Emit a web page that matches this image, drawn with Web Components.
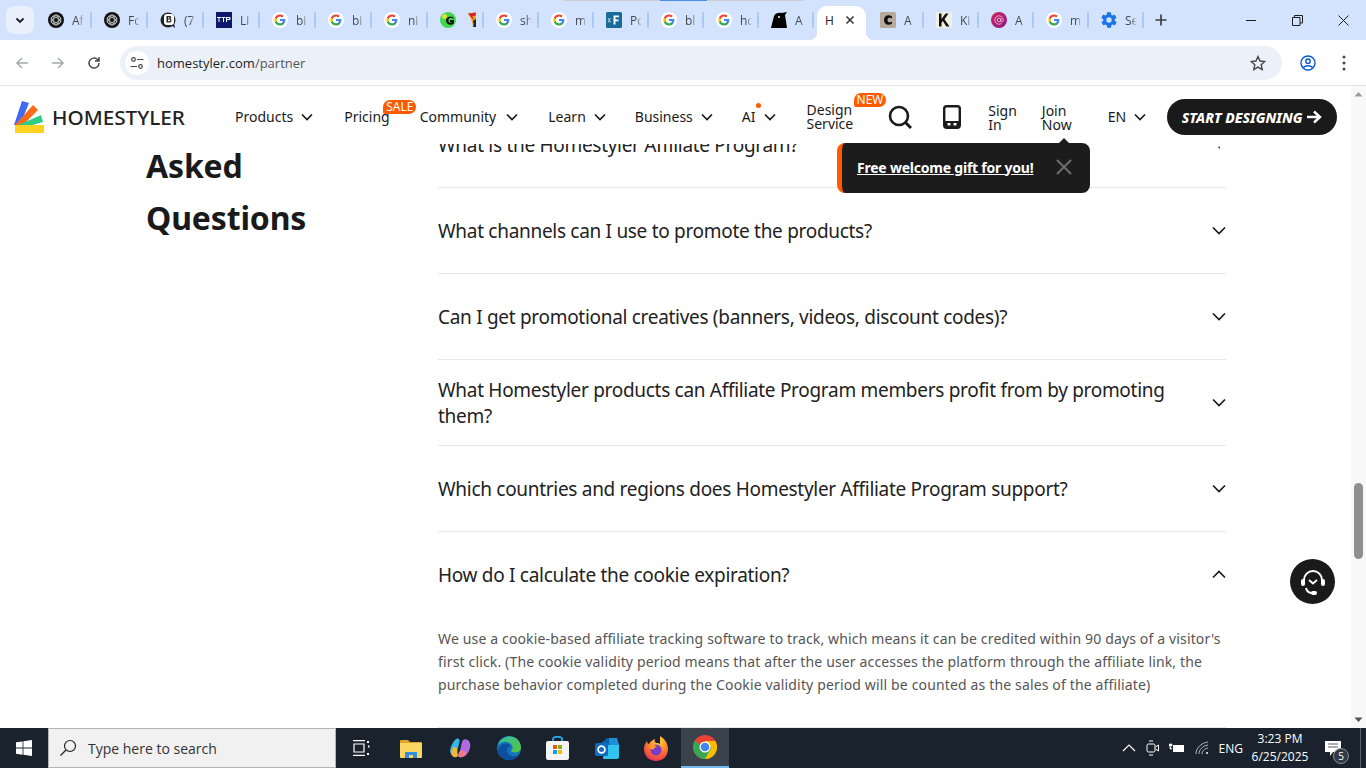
<!DOCTYPE html>
<html>
<head>
<meta charset="utf-8">
<title>Homestyler partner</title>
<style>
  html, body { margin: 0; padding: 0; height: 100%; overflow: hidden; }
  body { font-family: "Noto Sans", sans-serif; }
</style>
</head>
<body>
<app-window></app-window>
<script>
const GOOGLE = `<svg viewBox="0 0 16 16" width="16" height="16"><circle cx="8" cy="8" r="8" fill="#fff"/><g transform="translate(2.4 2.4) scale(.233)"><path fill="#4285F4" d="M47 24.5c0-1.6-.1-3.100-.4-4.500H24v8.800h12.900c-.6 3-2.300 5.500-4.900 7.200v6h7.900C44.500 37.800 47 31.700 47 24.500z"/><path fill="#34A853" d="M24 48c6.500 0 11.900-2.100 15.900-5.800l-7.900-6c-2.200 1.500-5 2.300-8 2.300-6.200 0-11.500-4.200-13.400-9.800H2.500v6.200C6.400 42.600 14.600 48 24 48z"/><path fill="#FBBC05" d="M10.600 28.700c-.5-1.500-.8-3-.8-4.700s.3-3.200.8-4.700v-6.200H2.500C.9 16.300 0 20 0 24s.9 7.700 2.500 10.900l8.100-6.200z"/><path fill="#EA4335" d="M24 9.500c3.500 0 6.700 1.200 9.200 3.600l6.900-6.900C35.900 2.400 30.500 0 24 0 14.600 0 6.400 5.400 2.500 13.100l8.100 6.200c1.900-5.600 7.200-9.800 13.400-9.800z"/></g></svg>`;
const KNOT = `<svg viewBox="0 0 16 16" width="16" height="16"><circle cx="8" cy="8" r="8" fill="#111"/><g fill="none" stroke="#ccc" stroke-width=".8"><circle cx="8" cy="8" r="5"/><ellipse cx="8" cy="8" rx="5" ry="2.400" transform="rotate(30 8 8)"/><ellipse cx="8" cy="8" rx="5" ry="2.400" transform="rotate(-30 8 8)"/><ellipse cx="8" cy="8" rx="5" ry="2.400" transform="rotate(90 8 8)"/></g></svg>`;
const ICONS = {
  google: GOOGLE,
  knot: KNOT,
  b: `<svg viewBox="0 0 16 16" width="16" height="16"><circle cx="8" cy="8" r="7.500" fill="#222"/><path d="M11 13l4 3-1-5z" fill="#222"/><rect x="4" y="2" width="10" height="11" rx="3" fill="#fff"/><path d="M6.500 4h3.200c2 0 2 2.500.6 3 1.800.4 1.600 3.500-.6 3.500H6.500zM8 5.200v1.300h1.200c.8 0 .8-1.300 0-1.300zM8 7.600v1.700h1.500c1 0 1-1.700 0-1.700z" fill="#222"/></svg>`,
  ttp: `<svg viewBox="0 0 16 16" width="16" height="16"><rect width="16" height="16" fill="#0b1a6e"/><path d="M1 5h4v1H3.500v4h-1V6H1zM5.500 5h4v1H8v4H7V6H5.500zM10 5h3.500c1.500 0 1.500 3 0 3H11v2h-1zM11 6v1h2c.5 0 .5-1 0-1z" fill="#fff"/></svg>`,
  greeng: `<svg viewBox="0 0 16 16" width="16" height="16"><circle cx="8" cy="8" r="8" fill="#44d651"/><circle cx="4.500" cy="4.500" r="2.500" fill="#d6e337"/><path d="M14 6.500C13 3.500 7 3.500 6 8c-.5 4.500 6 6.500 8 3V8h-4v2h2c-1 1.500-3.800.8-3.600-2 .2-2.500 3.300-3 4-1.500z" fill="#111"/></svg>`,
  flame: `<svg viewBox="0 0 8 16" width="8" height="16"><path d="M0 1.500L8 .5 7.500 4 8 5v10H5C4.500 10 3 6 0 1.500z" fill="#e8a020"/><path d="M0 1.500L8 .5 7.500 4 4 4c1 1 1.500 2 1.500 4C4 6 2 4 0 1.500z" fill="#d8261c"/><path d="M5 15c.8-2 .8-4 0-6l3-2v8z" fill="#222"/></svg>`,
  xf: `<svg viewBox="0 0 16 16" width="16" height="16"><rect width="16" height="16" rx="1.500" fill="#176a9a"/><path d="M1.500 6l1.200 2-1.200 2.500h1l.8-1.600.8 1.600h1L3.900 8 5.100 6h-1l-.7 1.300L2.600 6z" fill="#a8cfe4"/><path d="M7.500 3.500H13v1.800H9.500v2.200h3v1.800h-3v3.200h-2z" fill="#fff"/></svg>`,
  hood: `<svg viewBox="0 0 16 16" width="16" height="16"><path d="M0 16L3 4c1-3 5-4 8-3l5-1-2 3 2 13z" fill="#000"/><circle cx="8" cy="5" r="1" fill="#fff"/></svg>`,
  c: `<svg viewBox="0 0 16 16" width="16" height="16"><rect width="16" height="16" rx="1.500" fill="#b9a99a"/><path d="M12 4.500C8.500 2 4 3.500 4 8s4.500 6 8 3.500v-2C10 11 7.500 10.500 7.500 8S10 5 12 6.500z" fill="#111"/></svg>`,
  k: `<svg viewBox="0 0 16 16" width="16" height="16"><rect width="16" height="16" fill="#f1efe4"/><path d="M3 1.500h2.500v5.600l4-5.600h3L8.500 7.300l5 7.200h-3.200L6.800 9.100l-1.300 1.600v3.800H3z" fill="#111"/></svg>`,
  at: `<svg viewBox="0 0 16 16" width="16" height="16"><defs><linearGradient id="atg" x1="0" y1="0" x2="1" y2="1"><stop offset="0" stop-color="#d0245f"/><stop offset="1" stop-color="#8a1a86"/></linearGradient></defs><circle cx="8" cy="8" r="8" fill="url(#atg)"/><g fill="none" stroke="#f4c9dd" stroke-width=".8"><circle cx="8" cy="8" r="1.800"/><path d="M9.800 6.200V9c0 1.500 2.400 1.300 2.400-1a4.200 4.200 0 1 0-1.700 3.400"/></g></svg>`,
  gear: `<svg viewBox="0 0 24 24" width="16" height="16" style="transform:scale(1.150)"><path fill="#1a73e8" d="M19.400 13c.1-.3.100-.7.100-1s0-.7-.1-1l2.100-1.600c.2-.2.200-.4.100-.6l-2-3.500c-.1-.2-.4-.3-.6-.2l-2.500 1c-.5-.4-1.100-.7-1.700-1l-.4-2.600c0-.3-.2-.5-.5-.5h-4c-.3 0-.5.200-.5.400l-.4 2.700c-.6.200-1.100.6-1.700 1l-2.500-1c-.2-.1-.5 0-.6.200l-2 3.500c-.1.200-.1.500.1.600L4.600 11c-.1.300-.1.700-.1 1s0 .7.100 1l-2.100 1.600c-.2.200-.2.400-.1.600l2 3.500c.1.200.4.300.6.200l2.500-1c.5.400 1.100.7 1.700 1l.4 2.600c0 .3.200.5.500.5h4c.3 0 .5-.2.500-.4l.4-2.700c.6-.2 1.100-.6 1.700-1l2.500 1c.2.100.5 0 .6-.2l2-3.500c.1-.2.100-.5-.1-.6zM12 15.500a3.500 3.500 0 1 1 0-7 3.500 3.500 0 0 1 0 7z"/></svg>`
};

class TabItem extends HTMLElement {
  connectedCallback() {
    const icon = this.getAttribute('icon');
    const extra = this.getAttribute('extra');
    const w = this.getAttribute('w') || 56;
    this.attachShadow({ mode: 'open' });
    this.shadowRoot.innerHTML = `
      <style>
        :host { display: flex; align-items: center; box-sizing: border-box; height: 28px; padding-left: 12px; width: ${w}px; position: relative; flex: none; }
        .t { font: 12px "Open Sans", sans-serif; color: #45494f; margin-left: 8px; width: 12px; overflow: hidden; white-space: nowrap;
             -webkit-mask-image: linear-gradient(90deg, #000 50%, transparent); }
        .e { margin-left: 12px; display: flex; }
        .i { display: flex; }
        .sep { width: 2px; height: 16px; background: #a9c7f7; border-radius: 1px; margin-left: auto; }
      </style>
      <span class="i">${ICONS[icon]}</span>
      ${extra ? `<span class="e">${ICONS[extra]}</span>` : `<span class="t">${this.getAttribute('label') || ''}</span>`}
      <span class="sep"></span>`;
  }
}
customElements.define('tab-item', TabItem);

class TabStrip extends HTMLElement {
  constructor() {
    super();
    this.attachShadow({ mode: 'open' });
  }
  tabs(list) {
    return list.map(t => `<tab-item icon="${t[0]}" label="${t[1]}" w="${t[2] || 56}" ${t[3] ? `extra="${t[3]}"` : ''}></tab-item>`).join('');
  }
  connectedCallback() {
    this.shadowRoot.innerHTML = `
      <style>
        :host { display: flex; height: 40px; background: #d3e3fd; box-sizing: border-box; padding: 6px 0 0 6px; position: relative; flex: none; }
        .down { width: 28px; height: 28px; background: #e9f0fc; border-radius: 8px; display: flex; align-items: center; justify-content: center; margin-right: 2px; flex: none; }
        .active { width: 49px; height: 34px; background: #fff; border-radius: 10px 10px 0 0; flex: none; box-sizing: border-box; padding: 0 0 6px 8px; margin: 0 0 0 3px; display: flex; align-items: center; font: 12px "Open Sans", sans-serif; color: #202124; position: relative; }
        .active svg { margin-left: 11px; }
        .active::before, .active::after { content: ""; position: absolute; bottom: 0; width: 8px; height: 8px; background: radial-gradient(circle at 0 0, #d3e3fd 8px, #fff 8.500px); }
        .active::before { left: -8px; }
        .active::after { right: -8px; background: radial-gradient(circle at 100% 0, #d3e3fd 8px, #fff 8.500px); }
        .plus { margin: 1px 0 0 11px; display: flex; }
        .ctl { position: absolute; top: 0; right: 0; height: 40px; display: flex; }
        .ctl span { width: 46px; display: flex; align-items: center; justify-content: center; }
        .line { position: absolute; top: 0; left: 563px; width: 240px; height: 1px; background: linear-gradient(90deg, #ccc 0 97px, #4a90e8 97px 144px, #ccc 144px); }
      </style>
      <div class="line"></div>
      <div class="down"><svg width="12" height="12" viewBox="0 0 12 12"><path d="M2.500 4.500L6 8l3.500-3.500" fill="none" stroke="#1f1f1f" stroke-width="1.800"/></svg></div>
      ${this.tabs([['knot', 'Af'], ['knot', 'Fc'], ['b', '(7'], ['ttp', 'Li'], ['google', 'bi'], ['google', 'bi'], ['google', 'ni'], ['greeng', '', 56, 'flame'], ['google', 'sh', 55], ['google', 'm', 55], ['xf', 'Pc', 55], ['google', 'bl', 55], ['google', 'hc', 55], ['hood', 'A', 55]])}
      <div class="active">H<svg width="10" height="10" viewBox="0 0 10 10"><path d="M1.500 1.500l7 7m0-7l-7 7" stroke="#333" stroke-width="1.500"/></svg></div>
      <tab-item icon="c" label="A" w="58" style="padding-left:14px"></tab-item>
      <tab-item icon="k" label="Ki" w="55"></tab-item>
      <tab-item icon="at" label="A" w="55"></tab-item>
      <tab-item icon="google" label="m" w="55"></tab-item>
      <tab-item icon="gear" label="Se" w="55"></tab-item>
      <div class="plus"><svg width="12" height="28" viewBox="0 0 12 28"><path d="M6 8.500v11M.5 14h11" stroke="#3c4043" stroke-width="1.700" transform="translate(0 -1)"/></svg></div>
      <div class="ctl">
        <span><svg width="11" height="11"><path d="M0 5.500h10" stroke="#1f1f1f"/></svg></span>
        <span><svg width="11" height="11"><path d="M.5 2.500h7.500v8H.500zM2.500 2.500V.500h8v7.500H8" fill="none" stroke="#1f1f1f"/></svg></span>
        <span><svg width="11" height="11"><path d="M.5.500l10 10m0-10l-10 10" stroke="#1f1f1f"/></svg></span>
      </div>`;
  }
}
customElements.define('tab-strip', TabStrip);

class AddressBar extends HTMLElement {
  constructor() {
    super();
    this.attachShadow({ mode: 'open' });
  }
  connectedCallback() {
    this.shadowRoot.innerHTML = `
      <style>
        :host { display: flex; align-items: center; height: 46px; background: #fff; border-bottom: 1px solid #e3e3e3; box-sizing: border-box; flex: none; padding-top: 1px; }
        .nav { width: 36px; display: flex; justify-content: center; flex: none; }
        .pad { width: 4px; flex: none; }
        .omni { width: 1162px; height: 34px; margin-left: 8px; background: #ecf1f9; border-radius: 17px; display: flex; align-items: center; flex: none; font: 13px "Open Sans", sans-serif; color: #1f1f1f; box-sizing: border-box; padding: 0 16px 0 5px; }
        .tune { width: 24px; height: 24px; border-radius: 50%; background: #fff; display: flex; align-items: center; justify-content: center; margin-right: 8px; }
        .url span { color: #555; }
        .star { margin-left: auto; display: flex; }
        .acct { margin-left: 18px; display: flex; }
        .dots { margin-left: 26px; display: flex; }
      </style>
      <div class="pad"></div>
      <div class="nav"><svg width="16" height="16" viewBox="0 0 16 16"><path d="M14 8H3M8 3L3 8l5 5" fill="none" stroke="#a8abaf" stroke-width="1.500"/></svg></div>
      <div class="nav"><svg width="16" height="16" viewBox="0 0 16 16"><path d="M2 8h11M8 3l5 5-5 5" fill="none" stroke="#a8abaf" stroke-width="1.500"/></svg></div>
      <div class="nav"><svg width="16" height="16" viewBox="0 0 16 16"><path d="M13 8a5 5 0 1 1-1.500-3.500L13 6M13 2v4H9" fill="none" stroke="#474747" stroke-width="1.500"/></svg></div>
      <div class="omni">
        <div class="tune"><svg width="14" height="14" viewBox="0 0 14 14"><g fill="none" stroke="#474747" stroke-width="1.200"><circle cx="3.500" cy="3.500" r="1.800"/><circle cx="10.500" cy="10.500" r="1.800"/><path d="M7 3.500h6.500M.5 10.500H7"/></g></svg></div>
        <div class="url">homestyler.com<span>/partner</span></div>
        <div class="star"><svg width="16" height="16" viewBox="0 0 16 16"><path d="M8 1.500l2 4.500 4.800.5-3.600 3.200 1 4.800L8 12.100l-4.200 2.400 1-4.800L1.200 6.500 6 6z" fill="none" stroke="#474747" stroke-width="1.400"/></svg></div>
      </div>
      <div class="acct"><svg width="16" height="16" viewBox="0 0 16 16"><g fill="none" stroke="#0b57d0" stroke-width="1.400"><circle cx="8" cy="8" r="7"/><circle cx="8" cy="6.200" r="2.200"/><path d="M3.300 12.500c2.500-2.400 6.900-2.400 9.400 0"/></g></svg></div>
      <div class="dots"><svg width="4" height="16" viewBox="0 0 4 16"><g fill="#474747"><circle cx="2" cy="2" r="1.500"/><circle cx="2" cy="8" r="1.500"/><circle cx="2" cy="14" r="1.500"/></g></svg></div>`;
  }
}
customElements.define('address-bar', AddressBar);

const CHEV = `<svg width="12" height="8" viewBox="0 0 12 8"><path d="M1 1.500l5 5 5-5" fill="none" stroke="#1a1a1a" stroke-width="1.700"/></svg>`;

class NavItem extends HTMLElement {
  connectedCallback() {
    const badge = this.getAttribute('badge');
    const x = this.hasAttribute('chev');
    this.attachShadow({ mode: 'open' });
    this.shadowRoot.innerHTML = `
      <style>
        :host { display: flex; align-items: center; position: relative; font-size: 14px; color: #1a1a1a; line-height: 14px; flex: none; }
        .b { position: absolute; background: #ff5a00; color: #fff; font-size: 12px; line-height: 14px; height: 14px; border-radius: 7px 7px 7px 2px; padding: 0 3px; }
        svg { margin-left: var(--chev-gap, 8px); }
        .dot { position: absolute; width: 5px; height: 5px; border-radius: 50%; background: #ff5a00; left: 14px; top: -7px; }
      </style>
      <span><slot></slot></span>
      ${x ? CHEV : ''}
      ${badge ? `<span class="b" style="${this.getAttribute('badge-pos')}">${badge}</span>` : ''}
      ${this.hasAttribute('dot') ? '<span class="dot"></span>' : ''}`;
  }
}
customElements.define('nav-item', NavItem);

class SiteHeader extends HTMLElement {
  constructor() {
    super();
    this.attachShadow({ mode: 'open' });
  }
  connectedCallback() {
    this.shadowRoot.innerHTML = `
      <style>
        :host { display: flex; align-items: center; height: 58px; background: #fff; position: relative; z-index: 2; padding: 4px 0 0 14px; box-sizing: border-box; flex: none; }
        .logo { display: flex; align-items: center; width: 221px; flex: none; font-size: 20.700px; font-weight: 500; color: #222; }
        .logo svg { margin-right: 8px; }
        .cta { width: 170px; height: 36px; flex: none; margin-left: 21px; border-radius: 18px; background: #1a1a1a; color: #fff; display: flex; align-items: center; justify-content: center; font-size: 14px; font-weight: 800; font-style: italic; }
        .cta svg { margin-left: 4px; }
        .ic { display: flex; flex: none; }
      </style>
      <div class="logo">
        <svg width="30" height="32" viewBox="0 0 30 32">
          <path d="M0 24L8 0l7 2-9 22z" fill="#3e6bf2"/>
          <path d="M1 24L19 4l5 5L6 27z" fill="#ff6a1a"/>
          <path d="M2 25l25-11 2 7-24 7z" fill="#2fce85"/>
          <path d="M1 24l29 0v8H1z" fill="#ffd21f"/>
        </svg>
        HOMESTYLER
      </div>
      <nav-item chev>Products</nav-item>
      <nav-item style="margin-left:31px" badge="SALE" badge-pos="left:39px;top:-10px">Pricing</nav-item>
      <nav-item chev style="margin-left:30px;--chev-gap:10px">Community</nav-item>
      <nav-item chev style="margin-left:30px">Learn</nav-item>
      <nav-item chev style="margin-left:29px">Business</nav-item>
      <nav-item chev dot style="margin-left:29px">AI</nav-item>
      <nav-item style="margin-left:31px" badge="NEW" badge-pos="left:47px;top:-10px">Design<br>Service</nav-item>
      <div class="ic" style="margin-left:35px"><svg width="24" height="24" viewBox="0 0 24 24"><circle cx="11" cy="11" r="9" fill="none" stroke="#1a1a1a" stroke-width="2.600"/><path d="M17 17l6 6" stroke="#1a1a1a" stroke-width="3"/></svg></div>
      <div class="ic" style="margin-left:31px"><svg width="18" height="24" viewBox="0 0 18 24"><rect x="1.200" y="1.200" width="15.600" height="21.600" rx="2.500" fill="none" stroke="#1a1a1a" stroke-width="2.400"/><path d="M1 16h16v6H1z" fill="#1a1a1a"/><rect x="4.500" y="18" width="3" height="2.500" fill="#fff"/><rect x="10.500" y="18" width="3" height="2.500" fill="#fff"/></svg></div>
      <nav-item style="margin-left:27px;padding-top:2px">Sign<br>In</nav-item>
      <nav-item style="margin-left:25px;padding-top:2px">Join<br>Now</nav-item>
      <nav-item chev style="margin-left:36px">EN</nav-item>
      <div class="cta">START DESIGNING<svg width="16" height="14" viewBox="0 0 16 14"><path d="M1 7h12M8 1.500L14 7l-6 5.500" fill="none" stroke="#fff" stroke-width="2.400"/></svg></div>`;
  }
}
customElements.define('site-header', SiteHeader);

class GiftTip extends HTMLElement {
  connectedCallback() {
    this.attachShadow({ mode: 'open' });
    this.shadowRoot.innerHTML = `
      <style>
        :host { position: absolute; left: 837px; top: 57px; width: 253px; height: 50px; box-sizing: border-box; background: #1c1c1c; border-left: 5px solid #ff5a00; border-radius: 8px; display: flex; align-items: center; z-index: 3; padding: 0 0 2px 15px; }
        :host::before { content: ""; position: absolute; left: 217px; top: -5px; border: 5px solid transparent; border-top: 0; border-bottom-color: #1c1c1c; }
        a { color: #fff; font-size: 14px; font-weight: 700; text-decoration: underline; letter-spacing: -.22px; white-space: nowrap; }
        svg { position: absolute; left: 212px; top: 14px; }
      </style>
      <a>Free welcome gift for you!</a>
      <svg width="20" height="20" viewBox="0 0 20 20"><path d="M3 3l14 14m0-14L3 17" stroke="#6e6e6e" stroke-width="2"/></svg>`;
  }
}
customElements.define('gift-tip', GiftTip);

class FaqItem extends HTMLElement {
  chevron() {
    if (this.hasAttribute('tucked')) return 'M6.500 7.500h1.500';
    return this.hasAttribute('open') ? 'M1 7.500l6-6 6 6' : 'M1 1.500l6 6 6-6';
  }
  connectedCallback() {
    const open = this.hasAttribute('open');
    this.attachShadow({ mode: 'open' });
    this.shadowRoot.innerHTML = `
      <style>
        :host { display: block; border-bottom: 1px solid #e8e8e8; box-sizing: border-box; }
        .q { height: 85px; display: flex; align-items: center; justify-content: space-between; font-size: 19px; line-height: 26px; color: #222; letter-spacing: -.3px; }
        .q span { width: 745px; }
        svg { flex: none; }
        .a { font-size: 14px; line-height: 23px; color: #555; margin-top: -2px; height: 112px; box-sizing: border-box; padding-top: 12px; white-space: nowrap; letter-spacing: .15px; }
      </style>
      <div class="q"><span><slot></slot></span>
        <svg width="14" height="9" viewBox="0 0 14 9"><path d="${this.chevron()}" fill="none" stroke="#1a1a1a" stroke-width="1.700"/></svg>
      </div>
      ${open ? `<div class="a">${this.getAttribute('answer')}</div>` : ''}`;
  }
}
customElements.define('faq-item', FaqItem);

class FaqSection extends HTMLElement {
  connectedCallback() {
    this.attachShadow({ mode: 'open' });
    this.shadowRoot.innerHTML = `
      <style>
        :host { display: flex; align-items: flex-start; padding-left: 146px; margin-top: -42px; }
        h2 { width: 292px; margin: 38px 0 0; font-size: 32px; line-height: 52px; font-weight: 700; color: #1a1a1a; flex: none; letter-spacing: -.15px; }
        .list { width: 788px; flex: none; }
      </style>
      <h2>Asked<br>Questions</h2>
      <div class="list"><slot></slot></div>`;
  }
}
customElements.define('faq-section', FaqSection);

class ScrollBar extends HTMLElement {
  connectedCallback() {
    this.attachShadow({ mode: 'open' });
    this.shadowRoot.innerHTML = `
      <style>
        :host { width: 15px; flex: none; background: #f8f8f8; display: flex; flex-direction: column; align-items: center; justify-content: space-between; position: relative; padding: 5px 0; box-sizing: border-box; }
        .thumb { position: absolute; left: 3px; top: 397px; width: 9px; height: 76px; border-radius: 5px; background: #8f8f8f; }
      </style>
      <svg width="9" height="6"><path d="M.5 5.500L4.500 1l4 4.500z" fill="#9a9a9a"/></svg>
      <div class="thumb"></div>
      <svg width="9" height="6"><path d="M.5.500L4.500 5l4-4.500z" fill="#505050"/></svg>`;
  }
}
customElements.define('scroll-bar', ScrollBar);

class HelpButton extends HTMLElement {
  connectedCallback() {
    this.attachShadow({ mode: 'open' });
    this.shadowRoot.innerHTML = `
      <style>
        :host { position: absolute; left: 1290px; top: 473px; width: 45px; height: 45px; border-radius: 50%; background: #1a1a1a; display: flex; align-items: center; justify-content: center; z-index: 3; }
      </style>
      <svg width="26" height="28" viewBox="0 0 26 28"><g fill="none" stroke="#fff" stroke-width="2"><path d="M4 16V12a9 9 0 0 1 18 0v3"/><path d="M9 12l4 3.500 4-3.500" stroke-width="1.800"/><path d="M6 20c1 4 3 5 6 5"/></g><rect x="1" y="11" width="4" height="7" rx="2" fill="#fff"/><rect x="21" y="11" width="4" height="7" rx="2" fill="#fff"/><rect x="11" y="23" width="6" height="4" rx="2" fill="#fff"/></svg>`;
  }
}
customElements.define('help-button', HelpButton);

class PageView extends HTMLElement {
  connectedCallback() {
    this.attachShadow({ mode: 'open' });
    this.shadowRoot.innerHTML = `
      <style>
        :host { display: flex; flex: 1; min-height: 0; position: relative; background: #fff; }
        .main { flex: 1; min-width: 0; overflow: hidden; }
      </style>
      <div class="main">
        <site-header></site-header>
        <faq-section>
          <faq-item tucked>What is the Homestyler Affiliate Program?</faq-item>
          <faq-item>What channels can I use to promote the products?</faq-item>
          <faq-item>Can I get promotional creatives (banners, videos, discount codes)?</faq-item>
          <faq-item>What Homestyler products can Affiliate Program members profit from by promoting them?</faq-item>
          <faq-item>Which countries and regions does Homestyler Affiliate Program support?</faq-item>
          <faq-item open answer="We use a cookie-based affiliate tracking software to track, which means it can be credited within 90 days of a visitor's<br>first click. (The cookie validity period means that after the user accesses the platform through the affiliate link, the<br>purchase behavior completed during the Cookie validity period will be counted as the sales of the affiliate)">How do I calculate the cookie expiration?</faq-item>
        </faq-section>
      </div>
      <scroll-bar></scroll-bar>
      <gift-tip></gift-tip>
      <help-button></help-button>`;
  }
}
customElements.define('page-view', PageView);

class TaskBar extends HTMLElement {
  connectedCallback() {
    this.attachShadow({ mode: 'open' });
    this.shadowRoot.innerHTML = `
      <style>
        :host { display: flex; align-items: center; height: 40px; background: #19222d; flex: none; color: #fff; font-family: "Open Sans", sans-serif; position: relative; }
        .win { width: 48px; display: flex; justify-content: center; flex: none; }
        .search { width: 288px; height: 40px; flex: none; box-sizing: border-box; background: #f1f1f1; border: 1px solid #b5b5b5; display: flex; align-items: center; color: #333; font-size: 14px; padding-left: 10px; }
        .search svg { margin-right: 11px; }
        .cell { width: 49px; height: 40px; display: flex; align-items: center; justify-content: center; flex: none; box-sizing: border-box; }
        .cell.first { margin-left: 1px; }
        .cell.on { background: #3b424c; border-bottom: 2px solid #76b9ed; width: 48px; margin-left: 1px; }
        .tray { margin-left: auto; display: flex; align-items: center; height: 40px; font-size: 12px; }
        .tray > * { flex: none; }
        .clock { text-align: center; line-height: 18px; width: 66px; margin-left: 4px; }
        .note { position: relative; width: 40px; display: flex; justify-content: center; margin-right: 7px; }
        .count { position: absolute; left: 20px; top: 7px; width: 16px; height: 16px; border-radius: 50%; background: #333a44; border: 1px solid #8a8f96; font-size: 10px; line-height: 14px; text-align: center; box-sizing: border-box; }
        .edge { width: 5px; height: 40px; border-left: 1px solid #5c636c; }
      </style>
      <div class="win"><svg width="16" height="16" viewBox="0 0 16 16" fill="#fff"><path d="M0 2.300l6.600-.9v6.200H0zM7.400 1.300L16 0v7.600H7.400zM0 8.400h6.600v6.300L0 13.800zM7.400 8.400H16V16l-8.600-1.200z"/></svg></div>
      <div class="search"><svg width="18" height="18" viewBox="0 0 18 18"><g fill="none" stroke="#222" stroke-width="1.200"><circle cx="11" cy="7" r="5.500"/><path d="M7 11l-5.500 5.500"/></g></svg>Type here to search</div>
      <div class="cell first"><svg width="18" height="16" viewBox="0 0 18 16" fill="none" stroke="#fff" stroke-width="1.200"><path d="M0 .6h12M0 15.400h12M1 4h10v8H1z"/><path d="M15 1v2M15 6.500h1.500M15 13v2" stroke-width="2"/></svg></div>
      <div class="cell"><svg width="22" height="19" viewBox="0 0 22 19"><path d="M0 2a1 1 0 0 1 1-1h7l2 2h11a1 1 0 0 1 1 1v2H0z" fill="#e0a526"/><path d="M0 4h22v14a1 1 0 0 1-1 1H1a1 1 0 0 1-1-1z" fill="#fcd462"/><path d="M5 19v-6h12v6h-4v-3H9v3z" fill="#2f8fdc"/></svg></div>
      <div class="cell"><svg width="22" height="22" viewBox="0 0 22 22"><path d="M6 3C9 0 11 2 10.500 5L8 15c-1 3-5 3-6.500 1C0 13 3 6 6 3z" fill="#37b6e8"/><path d="M3 12c2-3 4-2 5 0l1 7c-3 3-6 0-7-2z" fill="#e8b83a"/><path d="M14 3c3-2 6 0 7 3 1 4-1 9-3 11-2 3-7 4-8 1l3-13z" fill="#b06ae0"/><path d="M10 15c3-3 6-1 8 1-2 4-7 6-9 3z" fill="#f0788a"/></svg></div>
      <div class="cell"><svg width="24" height="24" viewBox="0 0 24 24"><defs><linearGradient id="eg" x1="0" y1="0" x2="1" y2="1"><stop offset="0" stop-color="#35c1a0"/><stop offset="1" stop-color="#58c13a"/></linearGradient></defs><circle cx="12" cy="12" r="12" fill="#1173bd"/><path d="M1 9C3 2 10 0 14 .5 20 1 24 6 24 12c0 3-3 4.500-6 4.500-2.500 0-4-1-4-2 2-1 2-3 1-5C13 6 9 5 6 6 3.500 7 2 8 1 9z" fill="url(#eg)"/><path d="M10 14c0 5 5 8 11 5-2 3-5 5-9 5-6 0-11-5-11-10 1-4 5-7 9-6 3 0 4 2 3 3-2 0-3 1-3 3z" fill="#0d4f9c"/></svg></div>
      <div class="cell"><svg width="23" height="24" viewBox="0 0 23 24"><path d="M7 6V3c0-3 9-3 9 0v3" fill="none" stroke="#28a8ea" stroke-width="1.800"/><rect y="5" width="23" height="19" rx="2" fill="#f4f4f4"/><rect x="7" y="9" width="4" height="4" fill="#f25022"/><rect x="12" y="9" width="4" height="4" fill="#7fba00"/><rect x="7" y="14" width="4" height="4" fill="#00a4ef"/><rect x="12" y="14" width="4" height="4" fill="#ffb900"/></svg></div>
      <div class="cell"><svg width="24" height="22" viewBox="0 0 24 22"><path d="M4 8l8-7 6 1 6 6v12H8V17z" fill="#0a5fa8"/><path d="M10 8h14v12a2 2 0 0 1-2 2H8z" fill="#31c4f0"/><path d="M14 1h8l2 7h-10z" fill="#1d8fd8"/><rect y="6" width="13" height="13" rx="1.500" fill="#0f6cbd"/><circle cx="6.500" cy="12.500" r="3.400" fill="none" stroke="#fff" stroke-width="1.800"/></svg></div>
      <div class="cell"><svg width="24" height="25" viewBox="0 0 24 25"><defs><radialGradient id="ff" cx=".6" cy=".2" r=".9"><stop offset="0" stop-color="#ffd83a"/><stop offset=".5" stop-color="#ff7a2a"/><stop offset="1" stop-color="#e5245f"/></radialGradient></defs><path d="M12 25C5 25 0 20 0 13c0-3 1-6 3-8 0 2 1 3 2 3 1-2 3-4 6-5-1 2 0 3 1 4 2 0 3 0 4 1 0-3 0-5 0-8 4 2 8 7 8 13 0 7-5 12-12 12z" fill="url(#ff)"/><circle cx="12" cy="14" r="5.500" fill="#7a3bc8"/><path d="M5 10c3-2 7-1 8 1-2 0-3 1-3 2-2 1-4 0-5-3z" fill="#ff9a2a"/></svg></div>
      <div class="cell on"><svg width="24" height="24" viewBox="0 0 24 24"><circle cx="12" cy="12" r="12" fill="#ea4335"/><path d="M12 12L1.600 6A12 12 0 0 0 6 22.400L12 12z" fill="#34a853"/><path d="M12 12h12a12 12 0 0 1-18 10.400L12 12z" fill="#34a853"/><path d="M12 6h10.400A12 12 0 0 1 12 24l6-10.400L12 6z" fill="#fbbc05"/><circle cx="12" cy="12" r="5.500" fill="#fff"/><circle cx="12" cy="12" r="4.300" fill="#4285f4"/></svg></div>
      <div class="tray">
        <svg width="14" height="8" viewBox="0 0 14 8"><path d="M1 7l6-6 6 6" fill="none" stroke="#fff" stroke-width="1.200"/></svg>
        <svg width="14" height="18" viewBox="0 0 14 18" style="margin-left:10px" fill="none" stroke="#fff"><rect x="1" y="5" width="8" height="8" rx="1.500"/><path d="M9.500 8l3-2v6l-3-2M3 2h4M3 16h4"/></svg>
        <svg width="16" height="10" viewBox="0 0 16 10" style="margin-left:9px"><rect x="4" y="2" width="11" height="7" fill="#fff"/><path d="M0 1h3v2H0zM1 3v3h2" fill="#fff" stroke="#fff" stroke-width=".6"/></svg>
        <svg width="14" height="14" viewBox="0 0 14 14" style="margin-left:10px" fill="none" stroke="#b5b9bd"><path d="M1 13C1 7 6 2 13 1M4 13c0-4 3-8 9-9M7 13c0-3 2-5 6-6"/><circle cx="12" cy="12" r="1" fill="#fff" stroke="none"/></svg>
        <span style="margin-left:10px">ENG</span>
        <div class="clock">3:23 PM<br>6/25/2025</div>
        <div class="note"><svg width="16" height="15" viewBox="0 0 16 15"><path d="M0 0h16v11H8l-3 4v-4H0z" fill="#fff"/><path d="M3 3h10M3 6h10" stroke="#333" stroke-width=".8"/></svg><span class="count">5</span></div>
        <div class="edge"></div>
      </div>`;
  }
}
customElements.define('task-bar', TaskBar);

class AppWindow extends HTMLElement {
  connectedCallback() {
    this.attachShadow({ mode: 'open' });
    this.shadowRoot.innerHTML = `
      <style>
        :host { display: flex; flex-direction: column; width: 1366px; height: 768px; overflow: hidden; }
      </style>
      <tab-strip></tab-strip>
      <address-bar></address-bar>
      <page-view></page-view>
      <task-bar></task-bar>`;
  }
}
customElements.define('app-window', AppWindow);
</script>
</body>
</html>
